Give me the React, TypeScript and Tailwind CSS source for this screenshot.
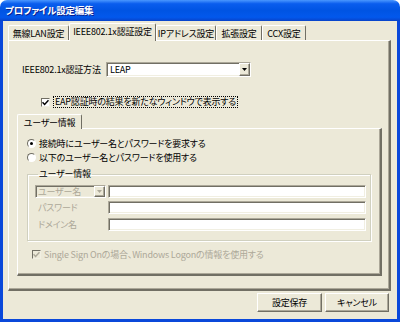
const FONT = "font-['Noto_Sans_CJK_JP','Noto_Sans',sans-serif] [font-feature-settings:'palt'] tracking-[-0.2px] whitespace-nowrap";

const SUNKEN =
  "border border-t-[#ACA899] border-l-[#ACA899] border-r-white border-b-white shadow-[inset_1px_1px_0_#716F64,inset_-1px_-1px_0_#F1EFE2]";

const RAISED =
  "border border-t-white border-l-white border-r-[#716F64] border-b-[#716F64] shadow-[inset_-1px_-1px_0_#ACA899]";

function DropArrow({ disabled = false }: { disabled?: boolean }) {
  return (
    <div className={`flex h-full w-[11px] items-center justify-center bg-[#ECE9D8] ${RAISED}`}>
      <svg width="5" height="3" viewBox="0 0 5 3">
        <path d="M0 0h5L2.5 3z" fill={disabled ? "#ACA899" : "#000"} />
      </svg>
    </div>
  );
}

function CheckBox({ disabled = false }: { disabled?: boolean }) {
  return (
    <div
      className={[
        "flex h-[9px] w-[9px] shrink-0 items-center justify-center border border-t-[#716F64] border-l-[#716F64] border-r-[#F1EFE2] border-b-[#F1EFE2]",
        disabled ? "bg-[#ECE9D8]" : "bg-white",
      ].join(" ")}
    >
      <svg width="7" height="7" viewBox="0 0 7 7">
        <path
          d="M0.5 3.2 L2.6 5.4 L6.5 1.2"
          fill="none"
          stroke={disabled ? "#ACA899" : "#000"}
          strokeWidth="1.5"
        />
      </svg>
    </div>
  );
}

function Radio({ checked }: { checked?: boolean }) {
  return (
    <div className="flex h-[9px] w-[9px] shrink-0 items-center justify-center rounded-full border border-t-[#716F64] border-l-[#716F64] border-r-white border-b-white bg-white">
      {checked && <div className="h-[3px] w-[3px] rounded-full bg-black" />}
    </div>
  );
}

function Tab({ label, width, active = false }: { label: string; width: string; active?: boolean }) {
  return (
    <div
      className={[
        "flex items-center justify-center rounded-t-[2px] border-t border-l border-r border-t-white border-l-white border-r-[#716F64] text-[9px] leading-none",
        width,
        active ? "relative z-10 -mb-px h-[18px] bg-[#ECE9D8] pb-[2px]" : "h-[15px]",
      ].join(" ")}
    >
      {label}
    </div>
  );
}

function FieldRow({ label, combo = false, className = "" }: { label: string; combo?: boolean; className?: string }) {
  return (
    <div className={`flex h-[13px] items-stretch gap-[2px] ${className}`}>
      {combo ? (
        <div className={`flex w-[71px] items-stretch bg-[#ECE9D8] ${SUNKEN}`}>
          <span className="flex flex-1 items-center pl-[2px] text-[9px] leading-none text-[#ACA899]">{label}</span>
          <DropArrow disabled />
        </div>
      ) : (
        <div className="flex w-[71px] items-center pl-[3px] text-[9px] leading-none text-[#ACA899]">{label}</div>
      )}
      <div className={`flex-1 bg-white ${SUNKEN}`} />
    </div>
  );
}

export default function App() {
  return (
    <div className={`flex h-[322px] w-[400px] flex-col bg-white text-black ${FONT}`}>
      <div className="flex h-[21px] shrink-0 items-center rounded-t-[7px] bg-[linear-gradient(180deg,#4A97FF_0%,#0A5DEE_18%,#0054E3_50%,#0258EC_82%,#0843C9_100%)] pl-[5px] text-[9.5px] font-bold leading-none text-white [text-shadow:1px_1px_0_#0A1E8C]">
        プロファイル設定編集
      </div>
      <div className="flex flex-1 flex-col border-x-[3px] border-b-[3px] border-[#0A48DA] bg-[#ECE9D8] pl-[5px] pr-[6px] pt-[2px]">
        <div className="flex h-[17px] items-end">
          <Tab label="無線LAN設定" width="w-[61px]" />
          <Tab label="IEEE802.1x認証設定" width="w-[87px]" active />
          <Tab label="IPアドレス設定" width="w-[60px]" />
          <Tab label="拡張設定" width="w-[46px]" />
          <Tab label="CCX設定" width="w-[44px]" />
        </div>
        <div className="flex h-[251px] flex-col border-t border-l border-t-white border-l-white border-r-2 border-b-2 border-r-[#716F64] border-b-[#716F64] shadow-[inset_-1px_-1px_0_#ACA899]">
          <div className="ml-[13px] mt-[21px] flex h-[15px] items-center">
            <span className="w-[84px] text-[9px] leading-none">IEEE802.1x認証方法</span>
            <div className={`flex h-full w-[145px] items-stretch bg-white ${SUNKEN}`}>
              <span className="flex flex-1 items-center pl-[3px] text-[9px] leading-none">LEAP</span>
              <DropArrow />
            </div>
          </div>
          <div className="ml-[32px] mt-[19px] flex h-[12px] items-center gap-[3px]">
            <CheckBox />
            <span className="border border-dotted border-black px-[1px] text-[9px] leading-[10px]">
              EAP認証時の結果を新たなウィンドウで表示する
            </span>
          </div>
          <div className="ml-[8px] mt-[6px] flex h-[14px] items-end">
            <div className="relative z-10 -mb-px flex h-[15px] w-[65px] items-center justify-center rounded-t-[2px] border-t border-l border-r border-t-white border-l-white border-r-[#716F64] bg-[#ECE9D8] text-[9px] leading-none">
              ユーザー情報
            </div>
          </div>
          <div className="ml-[8px] flex h-[148px] w-[365px] flex-col border-t border-l border-t-white border-l-white border-r-2 border-b-2 border-r-[#716F64] border-b-[#716F64] shadow-[inset_-1px_-1px_0_#ACA899]">
            <div className="ml-[9px] mt-[8px] flex h-[12px] items-center gap-[3px] text-[9px] leading-none">
              <Radio checked />
              <span>接続時にユーザー名とパスワードを要求する</span>
            </div>
            <div className="ml-[9px] mt-[2px] flex h-[12px] items-center gap-[3px] text-[9px] leading-none">
              <Radio />
              <span>以下のユーザー名とパスワードを使用する</span>
            </div>
            <fieldset className="ml-[9px] mt-[5px] w-[344px] border border-[#D0D0BF] pb-[9px] pl-[7px] pr-[4px] shadow-[inset_1px_1px_0_white,1px_1px_0_white]">
              <legend className="ml-[3px] px-[1px] text-[9px] leading-[12px]">ユーザー情報</legend>
              <FieldRow label="ユーザー名" combo className="mt-[5px]" />
              <FieldRow label="パスワード" className="mt-[3px]" />
              <FieldRow label="ドメイン名" className="mt-[4px]" />
            </fieldset>
            <div className="ml-[14px] mt-[7px] flex h-[12px] items-center gap-[3px] text-[9px] leading-none text-[#ACA899]">
              <CheckBox disabled />
              <span>Single Sign Onの場合、Windows Logonの情報を使用する</span>
            </div>
          </div>
        </div>
        <div className="mr-[2px] mt-[2px] flex justify-end gap-[3px]">
          <button className={`h-[19px] w-[65px] bg-[#ECE9D8] text-[9px] leading-none ${RAISED}`}>設定保存</button>
          <button className={`h-[19px] w-[64px] bg-[#ECE9D8] text-[9px] leading-none ${RAISED}`}>キャンセル</button>
        </div>
      </div>
    </div>
  );
}
